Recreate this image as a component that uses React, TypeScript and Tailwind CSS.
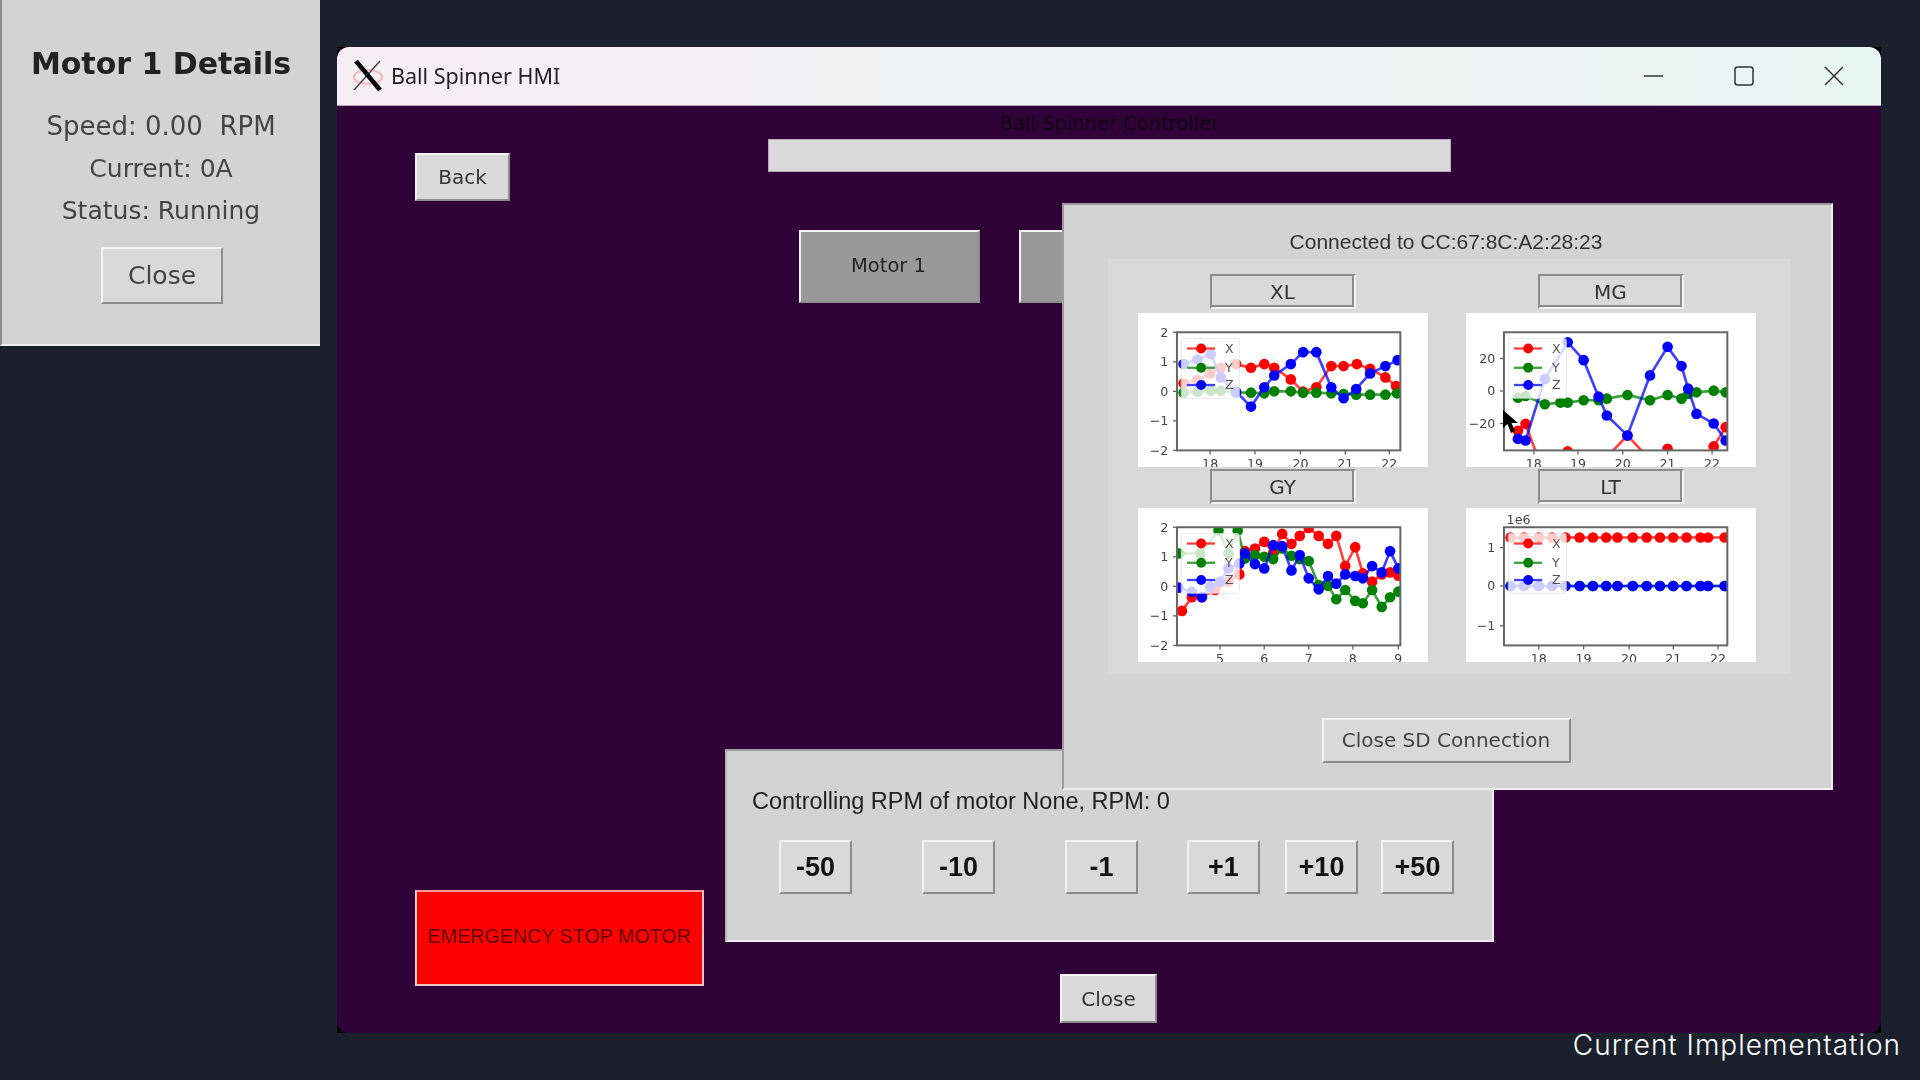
import clsx from "clsx";

type Pt = [number, number];

const RED = "#ff0000";
const GREEN = "#008000";
const BLUE = "#0000ff";

const raised = "border-2 border-t-[#f2f2f2] border-l-[#f2f2f2] border-b-[#8c8c8c] border-r-[#8c8c8c]";

const xlSeries: { color: string; pts: Pt[] }[] = [
  { color: RED, pts: [[250,340],[292,330],[330,310],[362,293],[408,282],[453,293],[493,282],[523,293],[573,328],[610,365],[650,352],[695,288],[732,288],[772,282],[812,296],[858,322],[890,348]] },
  { color: GREEN, pts: [[250,368],[292,365],[332,362],[362,362],[408,368],[453,368],[493,370],[523,364],[573,364],[610,368],[650,368],[695,370],[732,372],[770,374],[812,374],[858,374],[893,370]] },
  { color: BLUE, pts: [[250,282],[292,268],[332,252],[362,322],[408,365],[453,410],[493,352],[523,316],[573,282],[610,246],[650,246],[695,352],[732,385],[770,357],[812,310],[858,288],[895,270]] },
];

const mgSeries: { color: string; pts: Pt[] }[] = [
  { color: RED, pts: [[232,483],[255,462],[313,620],[382,545],[430,640],[475,640],[500,562],[562,497],[630,570],[683,537],[725,640],[745,640],[770,640],[822,530],[858,472]] },
  { color: GREEN, pts: [[232,383],[255,378],[313,403],[360,398],[382,398],[430,391],[475,391],[500,386],[562,375],[630,391],[683,375],[725,386],[745,372],[770,367],[822,362],[858,367]] },
  { color: BLUE, pts: [[232,507],[255,512],[313,327],[382,216],[430,270],[475,380],[500,437],[562,497],[630,316],[683,230],[725,288],[745,356],[770,432],[822,461],[858,512]] },
];

const gySeries: { color: string; pts: Pt[] }[] = [
  { color: RED, pts: [[245,438],[275,397],[305,397],[345,375],[385,350],[418,328],[435,258],[465,250],[493,230],[520,262],[547,206],[575,236],[600,212],[627,188],[657,212],[685,236],[710,212],[737,303],[767,246],[790,325],[818,350],[847,328],[872,322],[897,332]] },
  { color: GREEN, pts: [[237,265],[300,265],[355,196],[385,265],[413,196],[435,280],[465,270],[493,275],[520,282],[547,250],[575,272],[600,282],[627,288],[657,360],[685,362],[710,403],[737,375],[767,408],[790,415],[818,375],[847,426],[872,397],[897,380]] },
  { color: BLUE, pts: [[235,368],[275,380],[305,397],[330,365],[360,350],[385,310],[418,295],[435,265],[465,297],[493,310],[520,240],[547,243],[575,316],[600,270],[627,340],[657,373],[685,333],[710,356],[737,328],[767,333],[790,340],[818,303],[847,322],[872,258],[897,310]] },
];

const ltXs = [210,250,295,335,375,418,458,498,532,578,620,660,700,740,782,805,855];
const ltSeries: { color: string; pts: Pt[] }[] = [
  { color: RED, pts: ltXs.map((x): Pt => [x, 217]) },
  { color: GREEN, pts: ltXs.map((x): Pt => [x, 363]) },
  { color: BLUE, pts: ltXs.map((x): Pt => [x, 363]) },
];

function Plot({
  id,
  viewX,
  axisX,
  series,
  yTicks,
  xTicks,
  offset,
}: {
  id: string;
  viewX: number;
  axisX: number;
  series: { color: string; pts: Pt[] }[];
  yTicks: [string, number][];
  xTicks: [string, number][];
  offset?: string;
}) {
  const legendX = axisX + 13;
  return (
    <svg viewBox={`${viewX} 128 869 464`} className="block h-[154px] w-[290px] bg-white blur-[0.7px]">
      <defs>
        <clipPath id={id}>
          <rect x={axisX} y={186} width={673} height={356} />
        </clipPath>
      </defs>
      <g clipPath={`url(#${id})`}>
        {series.map((s) => (
          <g key={s.color}>
            <polyline points={s.pts.map((p) => p.join(",")).join(" ")} fill="none" stroke={s.color} strokeWidth={8} strokeOpacity={0.75} />
            {s.pts.map((p, i) => (
              <circle key={i} cx={p[0]} cy={p[1]} r={16} fill={s.color} />
            ))}
          </g>
        ))}
      </g>
      <rect x={legendX} y={205} width={175} height={180} rx={6} fill="#fff" fillOpacity={0.8} stroke="#ddd" strokeWidth={2} />
      {([[RED, "X", 235], [GREEN, "Y", 293], [BLUE, "Z", 345]] as [string, string, number][]).map(([c, l, y]) => (
        <g key={l}>
          <line x1={legendX + 17} x2={legendX + 102} y1={y} y2={y} stroke={c} strokeWidth={7} strokeOpacity={0.75} />
          <circle cx={legendX + 60} cy={y} r={15} fill={c} />
          <text x={legendX + 132} y={y + 13} fontSize={38} fill="#555" fontFamily="'DejaVu Sans',sans-serif">{l}</text>
        </g>
      ))}
      <rect x={axisX} y={186} width={673} height={356} fill="none" stroke="#666" strokeWidth={6} />
      {yTicks.map(([l, y]) => (
        <g key={l}>
          <line x1={axisX - 12} x2={axisX} y1={y} y2={y} stroke="#666" strokeWidth={4} />
          <text x={axisX - 26} y={y + 13} fontSize={38} textAnchor="end" fill="#444" fontFamily="'DejaVu Sans',sans-serif">{l}</text>
        </g>
      ))}
      {xTicks.map(([l, x]) => (
        <g key={l}>
          <line x1={x} x2={x} y1={542} y2={554} stroke="#666" strokeWidth={4} />
          <text x={x} y={596} fontSize={38} textAnchor="middle" fill="#444" fontFamily="'DejaVu Sans',sans-serif">{l}</text>
        </g>
      ))}
      {offset && (
        <text x={axisX + 8} y={175} fontSize={38} fill="#444" fontFamily="'DejaVu Sans',sans-serif">{offset}</text>
      )}
    </svg>
  );
}

function SensorTab({ label }: { label: string }) {
  return (
    <button className="flex h-[35px] w-[146px] items-center justify-center border-2 border-t-[#8c8c8c] border-l-[#8c8c8c] border-b-[#f2f2f2] border-r-[#f2f2f2] bg-[#d9d9d9] text-[20px] text-[#333] shadow-[inset_-2px_-2px_0_#8c8c8c]">
      {label}
    </button>
  );
}

function StepButton({ label, className }: { label: string; className?: string }) {
  return (
    <button className={clsx(raised, "flex h-[54px] w-[73px] items-center justify-center bg-[#d9d9d9] font-['Liberation_Sans',sans-serif] text-[27px] font-bold text-[#111]", className)}>
      {label}
    </button>
  );
}

function XLogo() {
  return (
    <svg viewBox="0 0 32 32" className="h-[32px] w-[32px]">
      <ellipse cx="16" cy="17" rx="14" ry="7" fill="none" stroke="#f7b5b8" strokeWidth="2" />
      <line x1="28" y1="1" x2="2" y2="30" stroke="#444" strokeWidth="1.4" />
      <line x1="4" y1="1" x2="28" y2="30" stroke="#000" strokeWidth="4.5" />
    </svg>
  );
}

export default function App() {
  return (
    <div className="relative h-screen w-full overflow-hidden bg-[#1a212c] font-['DejaVu_Sans',sans-serif]">
      {/* motor details window */}
      <div className="absolute top-0 left-0 flex h-[346px] w-[320px] flex-col items-center border-b-2 border-l-2 border-b-[#efefef] border-l-[#8c8c8c] bg-[#d3d3d3] pt-[45px] blur-[0.6px]">
        <h1 className="text-[30px] leading-[38px] font-bold text-[#222]">Motor 1 Details</h1>
        <p className="mt-[28px] text-[26px] leading-[30px] whitespace-pre text-[#444]">Speed: 0.00  RPM</p>
        <p className="mt-[13px] text-[25px] leading-[30px] text-[#444]">Current: 0A</p>
        <p className="mt-[12px] text-[25px] leading-[30px] text-[#444]">Status: Running</p>
        <button className={clsx(raised, "mt-[21px] ml-[2px] h-[57px] w-[122px] bg-[#d9d9d9] text-[25px] text-[#444]")}>Close</button>
      </div>

      {/* main HMI window */}
      <div className="absolute top-[47px] left-[337px] h-[986px] w-[1544px] bg-black blur-[0.6px]">
        <div className="flex h-full flex-col overflow-hidden rounded-[12px] bg-[#300338]">
          <div className="flex h-[59px] shrink-0 items-center border-b border-b-[#b9a6bd] bg-gradient-to-r from-[#f6eff3] to-[#e8f6f2] pl-[15px]">
            <XLogo />
            <span className="ml-[7px] font-['Noto_Sans',sans-serif] text-[21.5px] text-[#222]">Ball Spinner HMI</span>
            <div className="ml-auto flex items-center gap-[70px] pr-[37px]">
              <svg viewBox="0 0 20 20" className="h-[20px] w-[20px]"><line x1="0" y1="10" x2="19" y2="10" stroke="#333" strokeWidth="1.5" /></svg>
              <svg viewBox="0 0 20 20" className="h-[20px] w-[20px]"><rect x="1" y="1" width="18" height="18" rx="2.5" fill="none" stroke="#333" strokeWidth="1.5" /></svg>
              <svg viewBox="0 0 20 20" className="h-[20px] w-[20px]"><path d="M1 1 L19 19 M19 1 L1 19" fill="none" stroke="#333" strokeWidth="1.5" /></svg>
            </div>
          </div>

          <div className="relative flex min-h-0 flex-1 pl-[78px]">
            <div className="flex w-[290px] flex-col items-start justify-between pt-[47px] pb-[47px]">
              <button className={clsx(raised, "h-[48px] w-[95px] bg-[#d9d9d9] text-[20px] text-[#333]")}>Back</button>
              <button className="h-[96px] w-[289px] border-2 border-t-[#ff9a9a] border-l-[#ffd0d0] border-b-[#e8c4c4] border-r-[#e8c4c4] bg-[#ff0000] pb-[3px] font-['Liberation_Sans',sans-serif] text-[19.7px] whitespace-nowrap text-[#5c0000]">
                EMERGENCY STOP MOTOR
              </button>
            </div>

            <div className="ml-[20px] flex w-[769px] flex-col items-center">
              <p className="mt-[6px] text-[19.5px] leading-[23px] text-[#140016]">Ball Spinner Controller</p>
              <div className="mt-[4px] h-[33px] w-[683px] border border-[#b9a6bd] bg-[#d9d9d9]" />
              <div className="mt-[58px] flex gap-[39px] self-start pl-[74px]">
                <button className={clsx(raised, "h-[73px] w-[181px] bg-[#999999] pr-[2px] pb-[2px] text-[19.5px] text-[#222]")}>Motor 1</button>
                <button aria-label="Motor 2" className={clsx(raised, "h-[73px] w-[181px] bg-[#999999]")} />
              </div>
              <div className="mt-[446px] flex h-[193px] w-[769px] flex-col border-2 border-t-[#9c9c9c] border-l-[#b5b5b5] border-b-[#efefef] border-r-[#efefef] bg-[#d3d3d3]">
                <p className="mt-[36px] pl-[25px] font-['Liberation_Sans',sans-serif] text-[23.5px] leading-[28px] text-[#222]">Controlling RPM of motor None, RPM: 0</p>
                <div className="mt-[25px] flex pl-[52px]">
                  <StepButton label="-50" />
                  <StepButton label="-10" className="ml-[70px]" />
                  <StepButton label="-1" className="ml-[70px]" />
                  <StepButton label="+1" className="ml-[49px]" />
                  <StepButton label="+10" className="ml-[25px]" />
                  <StepButton label="+50" className="ml-[23px]" />
                </div>
              </div>
              <button className={clsx(raised, "mt-[32px] mr-[2px] h-[49px] w-[97px] bg-[#d9d9d9] text-[20px] text-[#333]")}>Close</button>
            </div>

            {/* SD connection popup */}
            <div className="absolute top-[97px] left-[725px] flex h-[587px] w-[771px] flex-col items-center border-2 border-t-[#9c9c9c] border-l-[#9c9c9c] border-b-[#efefef] border-r-[#efefef] bg-[#d3d3d3]">
              <p className="mt-[25px] mr-[3px] font-['Liberation_Sans',sans-serif] text-[21px] leading-[24px] text-[#333]">Connected to CC:67:8C:A2:28:23</p>
              <div className="mt-[5px] ml-[3px] h-[415px] w-[683px] bg-[#d9d9d9] pt-[15px] pl-[30px]">
                <div className="grid grid-cols-[290px_290px] gap-x-[38px] gap-y-[2px]">
                  <div className="flex flex-col items-center gap-[4px]">
                    <SensorTab label="XL" />
                    <Plot id="xl" viewX={115} axisX={230} series={xlSeries}
                      yTicks={[["2",186],["1",275],["0",364],["−1",453],["−2",542]]}
                      xTicks={[["18",330],["19",465],["20",602],["21",737],["22",870]]} />
                  </div>
                  <div className="flex flex-col items-center gap-[4px]">
                    <SensorTab label="MG" />
                    <Plot id="mg" viewX={78} axisX={190} series={mgSeries}
                      yTicks={[["20",265],["0",363],["−20",461]]}
                      xTicks={[["18",280],["19",413],["20",548],["21",683],["22",817]]} />
                  </div>
                  <div className="flex flex-col items-center gap-[4px]">
                    <SensorTab label="GY" />
                    <Plot id="gy" viewX={115} axisX={230} series={gySeries}
                      yTicks={[["2",186],["1",275],["0",364],["−1",453],["−2",542]]}
                      xTicks={[["5",360],["6",493],["7",627],["8",760],["9",897]]} />
                  </div>
                  <div className="flex flex-col items-center gap-[4px]">
                    <SensorTab label="LT" />
                    <Plot id="lt" viewX={78} axisX={190} series={ltSeries} offset="1e6"
                      yTicks={[["1",247],["0",363],["−1",483]]}
                      xTicks={[["18",295],["19",430],["20",567],["21",700],["22",835]]} />
                  </div>
                </div>
              </div>
              <button className={clsx(raised, "mt-[44px] mr-[3px] h-[45px] w-[249px] bg-[#d9d9d9] pb-[2px] text-[20px] text-[#444]")}>Close SD Connection</button>
            </div>
          </div>
        </div>
      </div>

      {/* mouse pointer */}
      <svg viewBox="0 0 17 24" className="absolute top-[410px] left-[1503px] h-[24px] w-[17px]">
        <path d="M0 0 L0 18 L4.5 14 L8 23 L12 21 L8.5 13 L15 13 Z" fill="#000" />
      </svg>

      <p className="absolute top-[1027px] right-[19px] font-['Inter',sans-serif] text-[28px] leading-[36px] font-light tracking-[1px] text-white">Current Implementation</p>
    </div>
  );
}
